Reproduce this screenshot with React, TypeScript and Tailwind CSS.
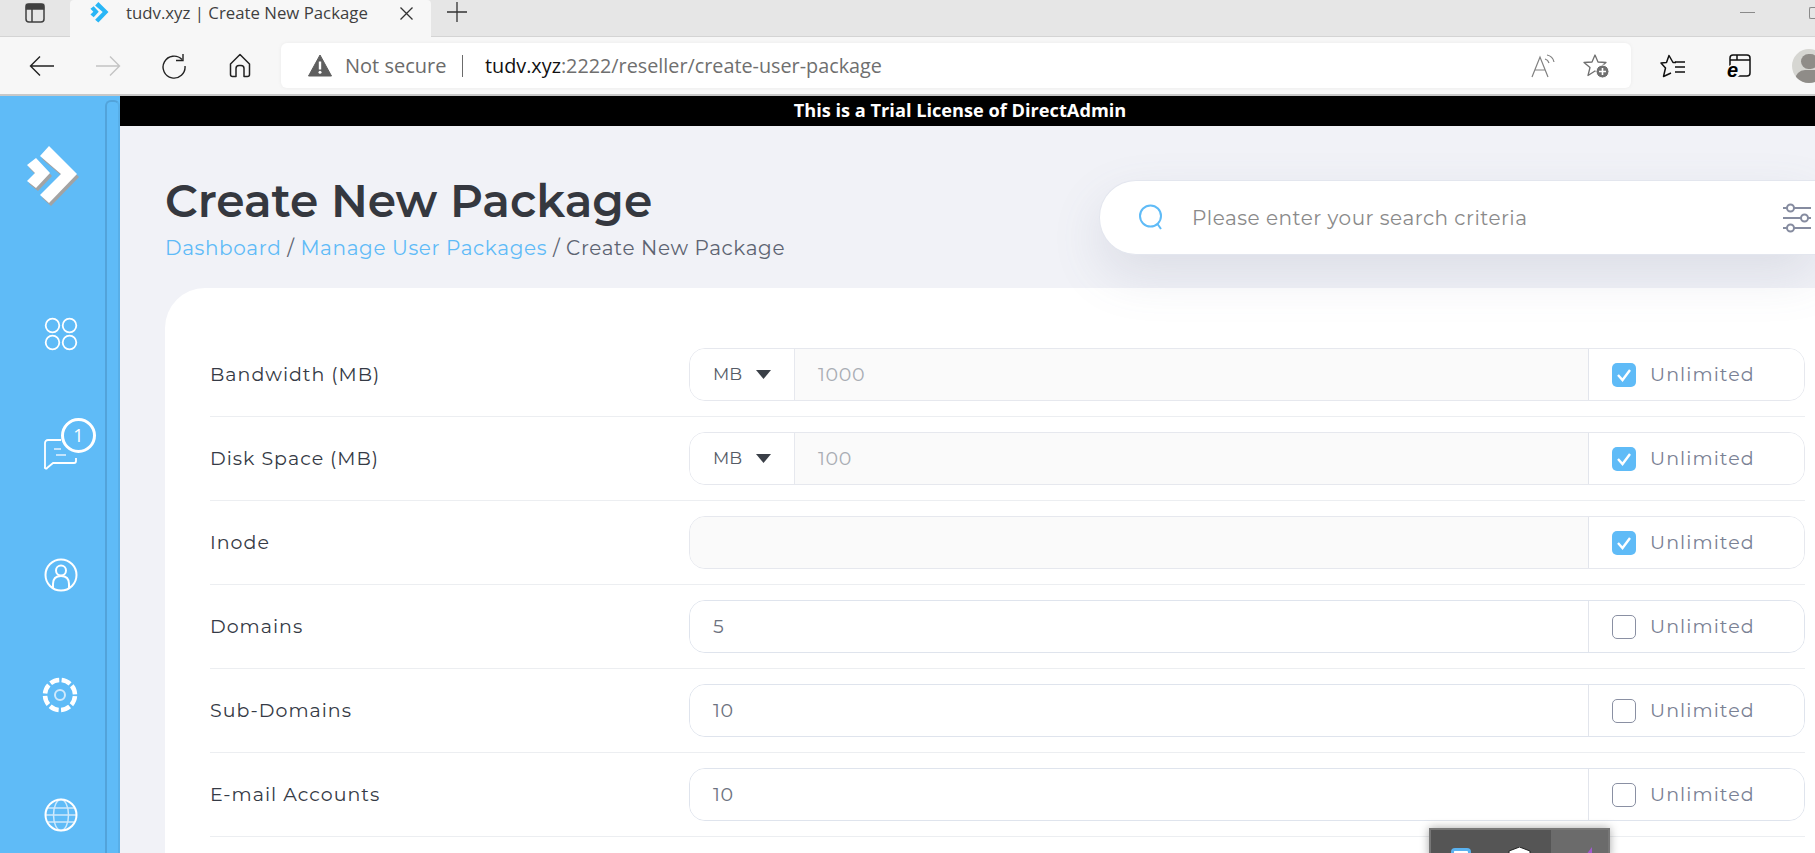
const ROWS = [
    { label: 'Bandwidth (MB)', unit: true, value: '1000', checked: true },
    { label: 'Disk Space (MB)', unit: true, value: '100', checked: true },
    { label: 'Inode', unit: false, value: '', checked: true },
    { label: 'Domains', unit: false, value: '5', checked: false },
    { label: 'Sub-Domains', unit: false, value: '10', checked: false },
    { label: 'E-mail Accounts', unit: false, value: '10', checked: false },
];

const OUTER_CHEVRON = 'M40 66 L49 56 L77 84 L49 113 L40 105 L61 84 Z';
const INNER_CHEVRON = 'M27 75 L36 68 L50 83 L36 98 L27 91 L35 83 Z';

function Logo({ width, height, color, shadow }: { width: number; height: number; color: string; shadow?: boolean }) {
    return (
        <svg width={width} height={height} viewBox="27 56 53 61" className="shrink-0">
            {shadow && (
                <g fill="#a3a3a3" transform="translate(2 3)">
                    <path d={OUTER_CHEVRON} />
                    <path d={INNER_CHEVRON} />
                </g>
            )}
            <g fill={color}>
                <path d={OUTER_CHEVRON} />
                <path d={INNER_CHEVRON} />
            </g>
        </svg>
    );
}

function Tabs() {
    return (
        <div className="h-[37px] bg-[#e6e6e6] flex shrink-0 border-b border-[#d4d4d4]">
            <div className="w-[70px] h-full flex items-center justify-center pb-[10px]">
                <svg width="20" height="20" viewBox="0 0 20 20" fill="none" stroke="#404040" strokeWidth="1.5">
                    <rect x="1" y="1" width="18" height="18" rx="3" />
                    <path d="M7 6v13" />
                    <path d="M1.5 1.5h17V6h-17z" fill="#404040" />
                </svg>
            </div>
            <div className="w-[361px] h-[37px] bg-[#f7f7f7] rounded-t-[4px] flex items-center pl-[20px] pr-[17px] pb-[11px]">
                <Logo width={20} height={22} color="#29b6f6" />
                <span className="ml-[16px] text-[16.8px] text-[#3f3f3f] font-['Open_Sans',sans-serif] whitespace-nowrap">tudv.xyz | Create New Package</span>
                <svg className="ml-auto" width="15" height="15" viewBox="0 0 15 15" stroke="#333" strokeWidth="1.3"><path d="M1.5 1.5 L13.5 13.5 M13.5 1.5 L1.5 13.5" /></svg>
            </div>
            <div className="w-[52px] h-full flex items-center justify-center pb-[12px]">
                <svg width="22" height="22" viewBox="0 0 22 22" stroke="#333" strokeWidth="1.3"><path d="M11 1 V21 M1 11 H21" /></svg>
            </div>
            <div className="flex-1 h-full flex justify-end pt-[12px]">
                <div className="w-[15px] h-px bg-[#8a8a8a] mr-[54px]" />
                <div className="w-[6px] h-[12px] mt-[-5px] border border-[#8a8a8a] rounded-l-[2px] border-r-0" />
            </div>
        </div>
    );
}

function AddressBar() {
    return (
        <div className="h-[59px] bg-[#f7f7f7] flex items-center shrink-0 border-b-2 border-[#c8c8c8] overflow-hidden">
            <svg className="ml-[29px] shrink-0" width="26" height="22" viewBox="0 0 26 22" fill="none" stroke="#222" strokeWidth="1.4">
                <path d="M25 11 H2 M11 1.5 L1.5 11 L11 20.5" />
            </svg>
            <svg className="ml-[40px] shrink-0" width="26" height="22" viewBox="0 0 26 22" fill="none" stroke="#c4c4c4" strokeWidth="1.4">
                <path d="M1 11 H24 M15 1.5 L24.5 11 L15 20.5" />
            </svg>
            <svg className="ml-[40px] shrink-0" width="26" height="26" viewBox="0 0 26 26" fill="none" stroke="#222" strokeWidth="1.4">
                <path d="M21 6.5 A11 11 0 1 0 24 13" />
                <path d="M15 7.5 H22 V1" />
            </svg>
            <svg className="ml-[41px] shrink-0" width="24" height="25" viewBox="0 0 24 25" fill="none" stroke="#222" strokeWidth="1.5" strokeLinejoin="round">
                <path d="M2.5 11 L12 1.5 L21.5 11 V21.5 a2 2 0 0 1 -2 2 H16 V15.5 a3 3 0 0 0 -3 -3 H11 a3 3 0 0 0 -3 3 V23.5 H4.5 a2 2 0 0 1 -2 -2 Z" />
            </svg>
            <div className="ml-[29px] w-[1350px] h-[45px] shrink-0 bg-white rounded-[6px] shadow-[0_0_4px_rgba(0,0,0,0.05)] flex items-center pl-[27px] font-['Open_Sans',sans-serif]">
                <svg className="shrink-0" width="24" height="23" viewBox="0 0 24 23">
                    <path d="M12 1 L23.5 22 H0.5 Z" fill="#5f5f5f" stroke="#5f5f5f" strokeLinejoin="round" />
                    <rect x="10.8" y="7.5" width="2.4" height="8" fill="#fff" />
                    <circle cx="12" cy="18.3" r="1.5" fill="#fff" />
                </svg>
                <span className="ml-[13px] w-[103px] text-[20px] text-[#6b6b6b] whitespace-nowrap">Not secure</span>
                <div className="ml-[14px] w-px h-[22px] bg-[#6b6b6b]" />
                <span className="ml-[22px] text-[19.8px] text-[#111] whitespace-nowrap">tudv.xyz<span className="text-[#6f6f6f]">:2222/reseller/create-user-package</span></span>
                <svg className="ml-auto shrink-0" width="26" height="26" viewBox="0 0 26 26" fill="none" stroke="#808080" strokeWidth="1.2">
                    <path d="M2 24 L10 4 L18 24 M5 17 H15" />
                    <path d="M15 6 a6 6 0 0 1 4 4 M17 2 a9 9 0 0 1 7 7" />
                </svg>
                <svg className="ml-[27px] mr-[20px] shrink-0" width="28" height="26" viewBox="0 0 28 26" fill="none" stroke="#6f6f6f" strokeWidth="1.3">
                    <path d="M12 2 L15 9 L23 9.5 L17 14.5 L19 22 L12 18 L5 22.5 L7 14.5 L1 9.5 L9 9 Z" strokeLinejoin="round" />
                    <circle cx="19.5" cy="18.5" r="6.5" fill="#6f6f6f" stroke="#fff" strokeWidth="1" />
                    <path d="M19.5 15 v7 M16 18.5 h7" stroke="#fff" strokeWidth="1.6" />
                </svg>
            </div>
            <svg className="ml-[29px] shrink-0" width="26" height="24" viewBox="0 0 26 24" fill="none" stroke="#111" strokeWidth="1.5">
                <path d="M16 8.5 H13 L9 1.5 L6.5 8.5 L1 9 L5.5 14 L3.5 22.5 L11 19" strokeLinejoin="round" />
                <path d="M15 8 h10 M15 13 h10 M15 18 h10" />
            </svg>
            <svg className="ml-[40px] shrink-0" width="26" height="30" viewBox="0 0 26 30" fill="none">
                <rect x="4" y="4" width="20" height="21" rx="3" stroke="#111" strokeWidth="1.5" />
                <path d="M4 9 h20 M11 4 v5" stroke="#111" strokeWidth="1.5" />
                <circle cx="8" cy="20" r="7" fill="#f7f7f7" />
                <text x="1" y="26" fontSize="20" fontWeight="700" fontStyle="italic" fill="#000" fontFamily="Liberation Sans, sans-serif">e</text>
            </svg>
            <div className="ml-[40px] w-[34px] h-[34px] shrink-0 rounded-full bg-[#d6d6d2] relative overflow-hidden">
                <div className="absolute left-[9px] top-[5px] w-[17px] h-[15px] rounded-full bg-[#8f8c88]" />
                <div className="absolute left-[3px] top-[21px] w-[30px] h-[20px] rounded-full bg-[#8f8c88]" />
            </div>
        </div>
    );
}

function Sidebar() {
    return (
        <aside className="w-[120px] shrink-0 bg-[#5fbbf7] flex flex-col relative overflow-hidden">
            <div className="absolute right-0 top-[4px] bottom-0 w-[15px] rounded-t-[6px] border-x-2 border-t-2 border-l-[#52a3da] border-t-[#52a3da] border-r-[#58afe8] bg-[#5fbbf7]" />
            <div className="pl-[27px] pt-[50px] relative">
                <Logo width={53} height={61} color="#fff" shadow />
                <svg className="mt-[110px] ml-[17px]" width="34" height="34" viewBox="0 0 34 34" fill="none" stroke="#fff" strokeWidth="1.8">
                    <circle cx="8.5" cy="8.5" r="6.8" /><circle cx="25.5" cy="8.5" r="6.8" /><circle cx="8.5" cy="25.5" r="6.8" /><circle cx="25.5" cy="25.5" r="6.8" />
                </svg>
                <div className="mt-[87px] ml-[17px] relative w-[34px] h-[32px]">
                    <svg width="34" height="32" viewBox="0 0 34 32" fill="none" stroke="#fff" strokeWidth="1.8">
                        <path d="M32 20 v3 a2 2 0 0 1 -2 2 H9 L3 30 a1 1 0 0 1 -2 -1 V5 a3 3 0 0 1 3 -3 H17" strokeLinejoin="round" />
                        <path d="M10 11 h7" stroke="#cfe9fc" /><path d="M12 17 h10" stroke="#cfe9fc" />
                    </svg>
                    <div className="absolute left-[17px] -top-[20px] w-[35px] h-[35px] rounded-full border-[3px] border-white bg-[#5fbbf7] flex items-center justify-center text-white text-[18px] font-['Open_Sans',sans-serif]">1</div>
                </div>
                <svg className="mt-[88px] ml-[17px]" width="34" height="34" viewBox="0 0 34 34" fill="none" stroke="#fff" strokeWidth="2">
                    <circle cx="17" cy="17" r="15.5" />
                    <circle cx="17" cy="12.5" r="5" />
                    <path d="M9 30 v-4 c0 -5 3 -8 8 -8 s8 3 8 8 v4" />
                </svg>
                <svg className="mt-[85px] ml-[15px]" width="36" height="36" viewBox="0 0 36 36" fill="none">
                    <circle cx="18" cy="18" r="15" stroke="#fff" strokeWidth="4.5" strokeDasharray="9.3 2.48" strokeDashoffset="-1.24" />
                    <circle cx="18" cy="18" r="5" stroke="#cfe9fc" strokeWidth="2" />
                </svg>
                <svg className="mt-[85px] ml-[17px]" width="34" height="34" viewBox="0 0 34 34" fill="none">
                    <g stroke="#cfe9fc" strokeWidth="1.5">
                        <ellipse cx="17" cy="17" rx="7.5" ry="15.5" />
                        <path d="M2 17 h30 M4 10 h26 M4 24 h26" />
                    </g>
                    <circle cx="17" cy="17" r="15.5" stroke="#fff" strokeWidth="2" />
                </svg>
            </div>
        </aside>
    );
}

function Row({ label, unit, value, checked }: { label: string; unit: boolean; value: string; checked: boolean }) {
    return (
        <div className="h-[84px] flex items-center border-b border-[#eceef1]">
            <div className="w-[479px] shrink-0 pt-px text-[19px] tracking-[1px] text-[#353a45]">{label}</div>
            <div className={`flex-1 h-[53px] flex border rounded-[16px] overflow-hidden ${checked ? 'border-[#e6e8ee]' : 'border-[#dfe4ed]'}`}>
                {unit && (
                    <div className="w-[105px] shrink-0 flex items-center pl-[23px] border-r border-[#e6e8ee] bg-white text-[17px] text-[#555b66]">
                        MB
                        <svg className="ml-[13px]" width="17" height="11" viewBox="0 0 17 11"><path d="M1 1 H16 L8.5 10 Z" fill="#3a3f47" /></svg>
                    </div>
                )}
                <div className={`flex-1 flex items-center pl-[23px] pt-px text-[19px] tracking-[0.7px] ${checked ? 'bg-[#fafafa] text-[#a9adb4]' : 'bg-white text-[#6d7280]'}`}>{value}</div>
                <div className="w-[216px] shrink-0 border-l border-[#e2e5ec] bg-white flex items-center pl-[23px]">
                    {checked ? (
                        <div className="w-[24px] h-[24px] rounded-[5px] bg-[#5fbbf7] flex items-center justify-center">
                            <svg width="16" height="14" viewBox="0 0 16 14" fill="none" stroke="#fff" strokeWidth="2.4"><path d="M2 7 L6.5 12 L14 2" /></svg>
                        </div>
                    ) : (
                        <div className="w-[24px] h-[24px] rounded-[5px] border border-[#8a90a3] bg-white" />
                    )}
                    <span className="ml-[14px] pt-px text-[19px] tracking-[1.1px] text-[#7a8194]">Unlimited</span>
                </div>
            </div>
        </div>
    );
}

export default function App() {
    return (
        <div className="w-[1815px] h-[853px] overflow-hidden flex flex-col bg-[#f1f2f7] font-['Montserrat','Inter',sans-serif] relative">
            <Tabs />
            <AddressBar />
            <div className="flex-1 flex min-h-0">
                <Sidebar />
                <main className="flex-1 min-w-0 flex flex-col">
                    <div className="h-[30px] shrink-0 bg-black text-white text-[18.2px] font-bold flex items-center justify-center pr-[15px] font-['Open_Sans',sans-serif]">This is a Trial License of DirectAdmin</div>
                    <div className="pl-[45px] flex h-[162px] shrink-0 relative z-10">
                        <div className="pt-[47px]">
                            <h1 className="text-[45.5px] leading-[56px] font-semibold text-[#35383f] whitespace-nowrap">Create New Package</h1>
                            <div className="text-[20px] mt-[4px] tracking-[0.62px] text-[#5d6472] whitespace-nowrap">
                                <span className="text-[#5fbbf7]">Dashboard</span> / <span className="text-[#5fbbf7]">Manage User Packages</span> / Create New Package
                            </div>
                        </div>
                        <div className="ml-auto mt-[54px] w-[716px] h-[75px] bg-white rounded-l-[37px] border border-[#e3e6ee] border-r-0 shadow-[0_20px_50px_rgba(100,110,140,0.15)] flex items-center pl-[38px]">
                            <svg className="shrink-0" width="27" height="27" viewBox="0 0 27 27" fill="none" stroke="#5fbbf7" strokeWidth="2">
                                <circle cx="12.5" cy="12" r="10.5" />
                                <path d="M19.5 20 L23 25" />
                            </svg>
                            <span className="ml-[27px] text-[20px] tracking-[0.5px] text-[#8a8a8a] whitespace-nowrap">Please enter your search criteria</span>
                            <svg className="ml-auto mr-[4px] shrink-0" width="28" height="30" viewBox="0 0 28 30" fill="none" stroke="#868ca0" strokeWidth="2">
                                <path d="M0 5 H4 M11 5 H28 M0 15 H18 M25 15 H28 M0 25 H4 M11 25 H28" />
                                <circle cx="7.5" cy="5" r="3.5" /><circle cx="21.5" cy="15" r="3.5" /><circle cx="7.5" cy="25" r="3.5" />
                            </svg>
                        </div>
                    </div>
                    <div className="flex-1 bg-white rounded-tl-[40px] pl-[45px] pr-[10px] pt-[45px] overflow-hidden ml-[45px]">
                        {ROWS.map((row) => (
                            <Row key={row.label} {...row} />
                        ))}
                    </div>
                </main>
            </div>
            <div className="absolute left-[1429px] top-[828px] w-[181px] h-[30px] bg-[#555] border-2 border-[#777] shadow-[0_0_10px_rgba(0,0,0,0.35)] flex z-20">
                <div className="w-[120px] relative">
                    <div className="absolute left-[20px] top-[18px] w-[20px] h-[12px] rounded-t-[4px] border-t-[3px] border-x-[3px] border-[#5ab2f0] bg-white" />
                    <svg className="absolute left-[77px] top-[17px]" width="23" height="12" viewBox="0 0 23 12"><path d="M11.5 0 L22 4 V12 H1 V4 Z" fill="#fff" stroke="#222" /></svg>
                </div>
                <div className="flex-1 bg-[#6b6b6b] relative">
                    <svg className="absolute left-[32px] top-[17px]" width="9" height="12" viewBox="0 0 9 12"><path d="M9 0 V12 H0 Z" fill="#a25bd0" /></svg>
                </div>
            </div>
        </div>
    );
}
